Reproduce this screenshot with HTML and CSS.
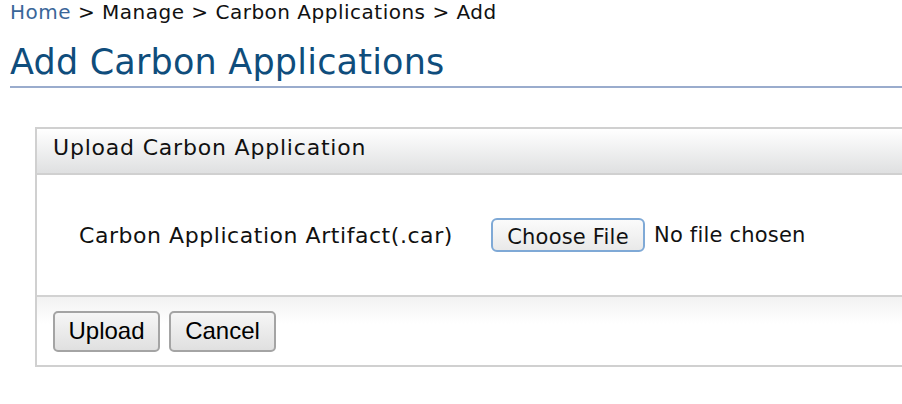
FILE: index.html
```html
<!DOCTYPE html>
<html>
<head>
<meta charset="utf-8">
<link rel="stylesheet" href="styles.css">
</head>
<body>
<div class="page">
  <div class="breadcrumb"><a class="crumb-link" href="#">Home</a> &gt; Manage &gt; Carbon Applications &gt; Add</div>
  <h1 class="title">Add Carbon Applications</h1>
  <div class="panel">
    <div class="panel-head">Upload Carbon Application</div>
    <div class="panel-body">
      <span class="field-label">Carbon Application Artifact(.car)</span>
      <span class="file-field">
        <button class="file-btn" type="button">Choose File</button>
        <span class="file-status">No file chosen</span>
      </span>
    </div>
    <div class="panel-foot">
      <button class="btn" type="button">Upload</button>
      <button class="btn" type="button">Cancel</button>
    </div>
  </div>
</div>
</body>
</html>
```

FILE: styles.css
```css
html, body {
  margin: 0;
  padding: 0;
  background: #ffffff;
  overflow: hidden;
}
.page {
  width: 902px;
  height: 404px;
  overflow: hidden;
  font-family: "DejaVu Sans", Verdana, sans-serif;
  color: #111;
}
.breadcrumb {
  padding: 0 0 0 10px;
  font-size: 20px;
  line-height: 24px;
  height: 24px;
  white-space: nowrap;
  letter-spacing: 0.5px;
}
.crumb-link {
  color: #3a6699;
  text-decoration: none;
}
.title {
  margin: 18px 0 0 10px;
  padding: 0 0 4px 0;
  font-size: 35px;
  font-weight: normal;
  line-height: 40px;
  color: #0f4d7c;
  border-bottom: 2px solid #9aaccd;
  white-space: nowrap;
  letter-spacing: 0.2px;
}
.panel {
  margin: 39px 0 0 35px;
  width: 900px;
  border: 2px solid #d0d0d0;
  border-right: none;
}
.panel-head {
  height: 44px;
  line-height: 38px;
  padding-left: 16px;
  font-size: 22px;
  letter-spacing: 0.8px;
  color: #111;
  background: linear-gradient(#ffffff, #dfe0e1);
  border-bottom: 2px solid #d0d0d0;
}
.panel-body {
  height: 120px;
  display: flex;
  align-items: center;
  padding-left: 42px;
  border-bottom: 2px solid #d2d2d2;
}
.field-label {
  width: 412px;
  font-size: 22px;
  letter-spacing: 0.55px;
  color: #111;
}
.file-field {
  display: flex;
  align-items: center;
  gap: 9px;
  font-size: 21px;
  letter-spacing: 0.2px;
}
.file-btn {
  font-family: "DejaVu Sans", Verdana, sans-serif;
  font-size: 21px;
  letter-spacing: 0.2px;
  color: #111;
  width: 154px;
  height: 34px;
  padding: 3px 0 0 0;
  border: 2px solid #7fa9d6;
  border-radius: 6px;
  background: linear-gradient(#fbfbfb, #e9e9e9);
}
.file-status {
  color: #111;
}
.panel-foot {
  height: 68px;
  display: flex;
  align-items: center;
  gap: 9px;
  padding-left: 16px;
  background: linear-gradient(#f2f2f2, #ffffff 40%);
}
.btn {
  font-family: "Liberation Sans", Arial, Helvetica, sans-serif;
  font-size: 24px;
  color: #000;
  height: 41px;
  width: 107px;
  padding: 0;
  border: 2px solid #a4a4a4;
  border-radius: 5px;
  background: linear-gradient(#f6f6f6, #e0e0e0);
}
```
